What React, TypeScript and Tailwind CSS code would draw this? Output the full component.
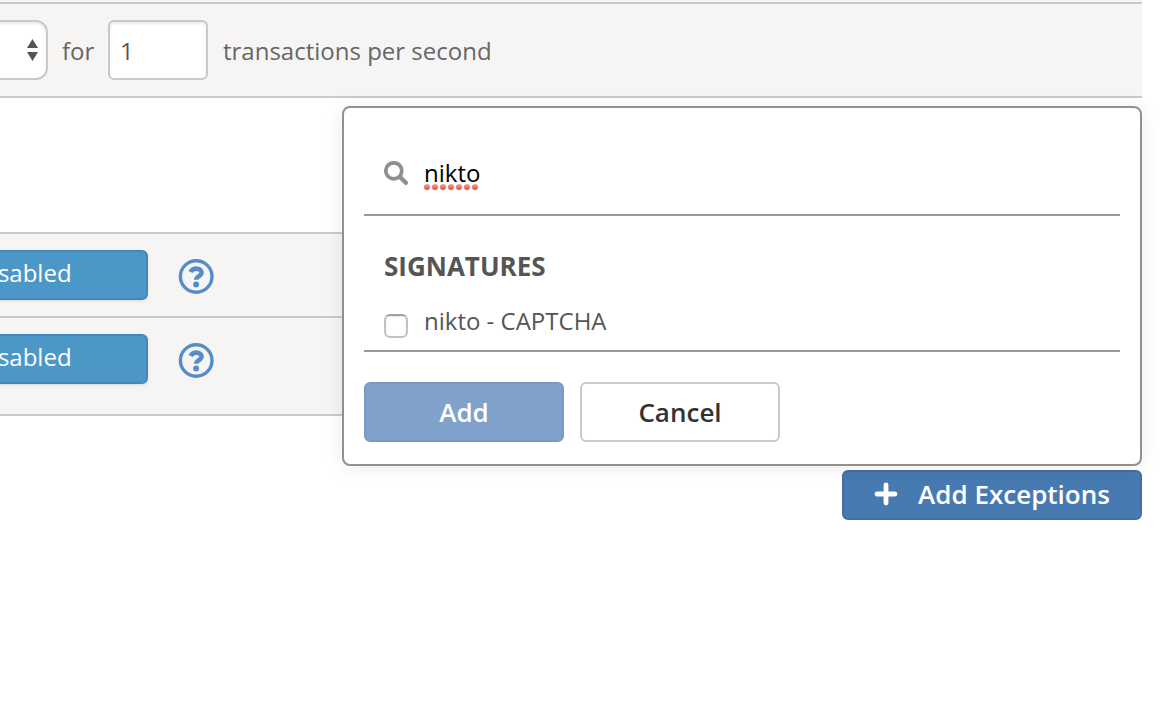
import { useState } from "react";

function HelpIcon() {
  return (
    <svg viewBox="0 0 36 36" className="size-9" fill="none" aria-hidden="true">
      <circle cx="18.200" cy="17.500" r="15.800" stroke="#568dc9" strokeWidth="3.400" />
      <path
        d="M12.600 13C13.800 10.500 15.900 9.600 18.300 9.600c3.200 0 5.300 1.700 5.300 4 0 3.500-5.400 3.500-5.400 7.200"
        stroke="#568dc9"
        strokeWidth="4.600"
      />
      <circle cx="18.100" cy="25.500" r="3" fill="#568dc9" />
    </svg>
  );
}

function SearchIcon() {
  return (
    <svg viewBox="0 0 24 24" className="size-6 shrink-0" fill="none" stroke="#8f8f8f" aria-hidden="true">
      <circle cx="9.800" cy="9.800" r="8" strokeWidth="3.700" />
      <path d="M16 16l5.800 5.800" strokeWidth="4.400" strokeLinecap="round" />
    </svg>
  );
}

function PlusIcon() {
  return (
    <svg viewBox="0 0 24 24" className="size-6" stroke="#fff" strokeWidth="4.800" strokeLinecap="round" aria-hidden="true">
      <path d="M12 3v18M3 12h18" />
    </svg>
  );
}

function SortArrows() {
  return (
    <svg viewBox="0 0 12 22" className="pointer-events-none absolute right-[9px] top-[19px] h-[22px] w-3" fill="#555" aria-hidden="true">
      <path d="M5.500 0l5.500 9h-11zM5.500 22l5.500-9h-11z" />
    </svg>
  );
}

function SpellingMarks() {
  return (
    <svg viewBox="0 0 56 6" className="pointer-events-none absolute left-0 top-[29px] h-[6px] w-14" aria-hidden="true">
      <defs>
        <linearGradient id="mark" x1="0" y1="0" x2="0" y2="1">
          <stop offset="0" stopColor="#f0a49c" />
          <stop offset="1" stopColor="#e5493a" />
        </linearGradient>
      </defs>
      {[3, 11, 19, 27, 35, 43, 51].map((x) => (
        <circle key={x} cx={x} cy="3" r="3" fill="url(#mark)" />
      ))}
    </svg>
  );
}

function ToggleRow({ className }: { className: string }) {
  const [enabled, setEnabled] = useState(false);
  return (
    <div className={`flex items-start border-t-2 border-[#c9c9c9] bg-[#f6f5f4] pt-4 ${className}`}>
      <button
        type="button"
        onClick={() => setEnabled(!enabled)}
        className="-ml-[102px] h-[50px] w-[250px] shrink-0 rounded-md border-2 border-[#4488b3] bg-[#4b98c8] pb-1 text-2xl leading-8 text-white shadow-sm"
      >
        {enabled ? "Enabled" : "Disabled"}
      </button>
      <button type="button" aria-label="Help" className="ml-[30px] mt-[9px]">
        <HelpIcon />
      </button>
    </div>
  );
}

function ExceptionsPopup() {
  const [query, setQuery] = useState("nikto");
  return (
    <div
      role="dialog"
      aria-label="Add exceptions"
      className="absolute bottom-[54px] right-0 w-[800px] rounded-lg border-2 border-[#919191] bg-white px-5 pb-[22px] pt-9 shadow-[0_2px_20px_rgba(0,0,0,0.08)]"
    >
      <div className="flex h-[72px] items-center gap-4 border-b-2 border-[#999] px-5 pb-3">
        <SearchIcon />
        <div className="relative grow">
          <input
            type="text"
            aria-label="Search signatures"
            value={query}
            onChange={(e) => setQuery(e.target.value)}
            spellCheck={false}
            className="block h-9 w-full bg-transparent text-2xl leading-9 text-black outline-none"
          />
          {query === "nikto" && <SpellingMarks />}
        </div>
      </div>
      <div className="border-b-2 border-[#999] px-5 pb-[10px] pt-[30px]">
        <h2 className="text-[26px] font-bold leading-10 text-[#555]">SIGNATURES</h2>
        <label className="mt-4 flex h-[38px] items-center gap-4 text-2xl text-[#555]">
          <input
            type="checkbox"
            className="mt-[10px] size-6 shrink-0 appearance-none rounded-md border-2 border-[#c2c2c2] border-t-[#a0a0a0] bg-white shadow-[inset_0_1px_2px_rgba(0,0,0,0.1)] checked:bg-[#477ab1]"
          />
          nikto - CAPTCHA
        </label>
      </div>
      <div className="mt-[30px] flex gap-4">
        <button
          type="button"
          className="h-[60px] w-[200px] rounded-md border-2 border-[#7a9ac2] bg-[#80a1c9] text-[26px] font-semibold leading-9 text-white"
        >
          Add
        </button>
        <button
          type="button"
          className="h-[60px] w-[200px] rounded-md border-2 border-[#cacaca] bg-white text-[26px] font-semibold leading-9 text-[#333]"
        >
          Cancel
        </button>
      </div>
    </div>
  );
}

export default function App() {
  return (
    <main className="min-h-screen overflow-hidden bg-white pr-[22px] font-['Open_Sans',sans-serif] text-2xl text-[#666]">
      <div className="h-0.5 bg-[#f6f5f4]" />
      <div className="flex h-24 items-start border-y-2 border-[#c9c9c9] bg-[#f6f5f4] pt-4">
        <div className="relative -ml-[150px] w-[198px] shrink-0">
          <select
            aria-label="Limit"
            className="block h-[60px] w-full appearance-none rounded-xl border-2 border-[#c9c9c9] bg-white shadow-[inset_0_2px_3px_rgba(0,0,0,0.08)]"
          >
            <option />
          </select>
          <SortArrows />
        </div>
        <label htmlFor="rate" className="ml-[14px] w-[46px] leading-[62px]">
          for
        </label>
        <input
          id="rate"
          type="text"
          defaultValue="1"
          className="h-[60px] w-[100px] rounded-md border-2 border-[#c9c9c9] bg-white px-[10px] text-[#555] shadow-[inset_0_2px_3px_rgba(0,0,0,0.08)]"
        />
        <span className="ml-[15px] leading-[62px]">transactions per second</span>
      </div>
      <div className="mt-[134px] border-b-2 border-[#c9c9c9]">
        <ToggleRow className="h-[84px]" />
        <ToggleRow className="h-[98px]" />
      </div>
      <div className="relative mt-[54px] flex justify-end">
        <ExceptionsPopup />
        <button
          type="button"
          className="flex h-[50px] w-[300px] items-center justify-center gap-5 rounded-md border-2 border-[#416fa6] bg-[#477ab1] pb-0.5 text-[26px] font-semibold leading-9 text-white"
        >
          <PlusIcon />
          Add Exceptions
        </button>
      </div>
    </main>
  );
}
